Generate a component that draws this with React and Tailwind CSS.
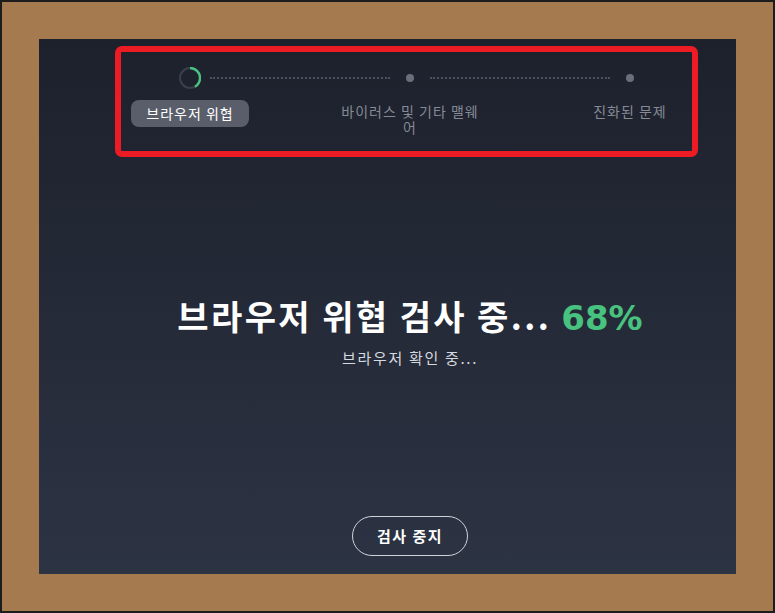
import React from "react";

const steps = [
    { label: "브라우저 위협", active: true },
    { label: "바이러스 및 기타 맬웨어", active: false },
    { label: "진화된 문제", active: false },
];

function Spinner() {
    return (
        <svg width="22" height="22" viewBox="0 0 22 22" className="shrink-0">
            <circle cx="11" cy="11" r="10" fill="none" stroke="#3a3f4b" strokeWidth="2" />
            <circle
                cx="11"
                cy="11"
                r="10"
                fill="none"
                stroke="#48c27f"
                strokeWidth="2.4"
                strokeDasharray="26 63"
                transform="rotate(-90 11 11)"
            />
        </svg>
    );
}

function Dot() {
    return <div className="w-2 h-2 rounded-full bg-[#6b6f7b] shrink-0" />;
}

function Line() {
    return <div className="w-[180px] border-t-2 border-dotted border-[#4b505c] shrink-0" />;
}

export default function App() {
    return (
        <div
            className="w-[775px] h-[613px] bg-[#a67a4f] border-2 border-[#1c1c1c] overflow-hidden"
            style={{ fontFamily: '"Noto Sans CJK KR", "Noto Sans", sans-serif' }}
        >
            <div className="ml-[37px] mt-[37px] w-[697px] h-[535px] bg-gradient-to-b from-[#1d212c] to-[#2c3343] pl-[45px] pt-[7px] flex flex-col">
                {/* step tracker */}
                <div className="ml-[31px] w-[583px] h-[111px] border-[6px] border-[#ed1c24] rounded-[7px] pt-[15px]">
                    <div className="flex items-center pl-[58px]">
                        <Spinner />
                        <div className="ml-[9px]"><Line /></div>
                        <div className="ml-[16px]"><Dot /></div>
                        <div className="ml-[16px]"><Line /></div>
                        <div className="ml-[16px]"><Dot /></div>
                    </div>
                    <div className="mt-[11px] ml-[-6px] grid grid-cols-[150px_150px_150px] gap-x-[70px]">
                        {steps.map((s) => (
                            <div key={s.label} className="flex justify-center text-center">
                                {s.active ? (
                                    <span className="px-[15px] h-[27px] leading-[27px] rounded-lg bg-[#5a5e6b] text-white text-[14px] tracking-[1px]">
                                        {s.label}
                                    </span>
                                ) : (
                                    <span className="max-w-[146px] pt-[3px] text-[14px] leading-[16px] tracking-[1px] text-[#858a96]">
                                        {s.label}
                                    </span>
                                )}
                            </div>
                        ))}
                    </div>
                </div>

                {/* status */}
                <h1 className="mt-[139px] text-center text-[34px] leading-[40px] font-bold text-white tracking-[2.4px]">
                    브라우저 위협 검사 중...{" "}
                    <span className="text-[#48c27f] tracking-normal" style={{ fontFamily: '"DejaVu Sans", sans-serif' }}>68%</span>
                </h1>
                <p className="mt-[10px] text-center text-[15px] leading-[20px] tracking-[1.7px] text-[#d6d9df]">브라우저 확인 중...</p>

                <div className="mt-[148px] flex justify-center">
                    <button className="w-[116px] h-[40px] rounded-full border border-[#d0d3d9] text-white text-[15px] font-bold tracking-[1.5px]">
                        검사 중지
                    </button>
                </div>
            </div>
        </div>
    );
}
